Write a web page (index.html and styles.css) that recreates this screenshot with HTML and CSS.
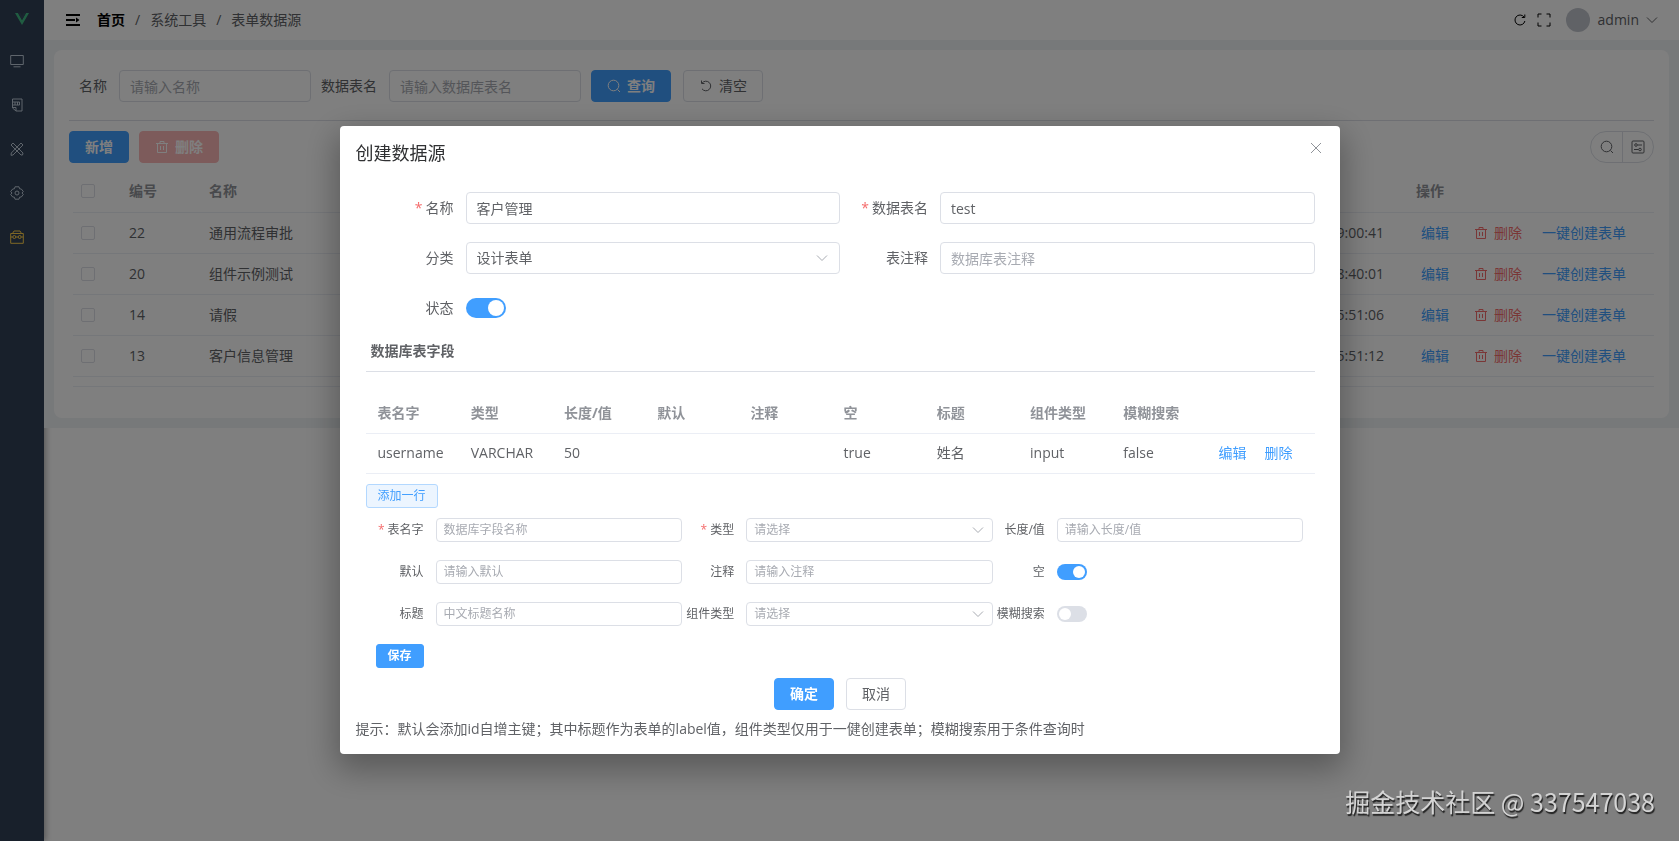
FILE: index.html
```html
<!DOCTYPE html>
<html lang="zh-CN">
<head>
    <meta charset="UTF-8">
    <meta name="viewport" content="width=device-width, initial-scale=1.0">
    <link rel="stylesheet" href="styles.css">
    <title>表单数据源</title>
</head>
<body>
    <svg class="sprite" aria-hidden="true">
        <symbol id="i-delete" viewBox="0 0 14 14"><path d="M1 3.500h12M2.500 3.500v9h9v-9M5 3.500V1.500h4v2M5.500 6v4M8.500 6v4"/></symbol>
        <symbol id="i-search" viewBox="0 0 14 14"><circle cx="6.500" cy="6.500" r="5.300"/><path d="M10.500 10.500l2.500 2.500"/></symbol>
        <symbol id="i-down" viewBox="0 0 14 14"><path d="M2 4.500l5 5 5-5"/></symbol>
    </svg>

    <div class="app">
        <aside class="sidebar">
            <svg class="logo" viewBox="0 0 14 14"><path d="M0 1h3l4 7 4-7h3L7 13z" fill="#41b883"/><path d="M3 1h2.500L7 4l1.500-3H11L7 8z" fill="#34495e"/></svg>
            <nav class="menu">
                <a href="#" aria-label="首页"><svg class="icon" viewBox="0 0 14 14"><path d="M.7 1.500h12.600v9H.7zM3.500 12.800h7"/></svg></a>
                <a href="#" aria-label="表单"><svg class="icon" viewBox="0 0 14 14"><path d="M2.500 1H12v12H6L2.500 10zM2.500 9.500H6V13M2.500 4h7v3h-7M5 4v3M7.500 4v3"/></svg></a>
                <a href="#" aria-label="设计"><svg class="icon" viewBox="0 0 14 14"><path d="M1 3l2-2 10 10-.5 2L11 13zM11 1l2 2L3 13l-2 .3L1.300 11z"/></svg></a>
                <a href="#" aria-label="设置"><svg class="icon" viewBox="0 0 14 14"><path d="M5 .8h4l.6 2 1.700.2 2 2.500L12 7l1.300 1.500-2 2.500-1.700.2-.6 2H5l-.6-2-1.700-.2-2-2.500L2 7 .7 5.500l2-2.500 1.700-.2z"/><circle cx="7" cy="7" r="2"/></svg></a>
                <a href="#" class="active" aria-label="系统工具"><svg class="icon" viewBox="0 0 14 14"><path d="M.7 3.500h12.600v9.800H.7zM2.500 3.500L4 1h6l1.500 2.500M.7 7h2M6 7h2M11.300 7h2"/><circle cx="4.300" cy="7" r="1.500"/><circle cx="9.700" cy="7" r="1.500"/></svg></a>
            </nav>
        </aside>

        <div class="page">
            <header class="header">
                <button class="icon-btn" aria-label="菜单"><svg class="icon fold" viewBox="0 0 14 14"><path d="M0 2h14M0 7h9M0 12h14"/><path d="M10 4.500L13.500 7 10 9.500z" fill="currentColor" stroke="none"/></svg></button>
                <nav class="breadcrumb">
                    <a href="#">首页</a><i>/</i><span>系统工具</span><i>/</i><span>表单数据源</span>
                </nav>
                <div class="tools">
                    <button class="icon-btn" aria-label="刷新"><svg class="icon" viewBox="0 0 14 14"><path d="M11 4A5 5 0 1 0 11.900 8M11.800 1.500v3H8.800"/></svg></button>
                    <button class="icon-btn" aria-label="全屏"><svg class="icon" viewBox="0 0 14 14"><path d="M1 4.500V1h3.500M9.500 1H13v3.500M13 9.500V13H9.500M4.500 13H1V9.500"/></svg></button>
                    <button class="user"><span class="avatar"></span>admin<svg class="icon"><use href="#i-down"/></svg></button>
                </div>
            </header>

            <main class="main">
                <section class="card">
                    <form class="search">
                        <label for="q-name">名称</label>
                        <input class="input" id="q-name" type="text" placeholder="请输入名称">
                        <label for="q-table">数据表名</label>
                        <input class="input" id="q-table" type="text" placeholder="请输入数据库表名">
                        <button type="button" class="btn primary"><svg class="icon"><use href="#i-search"/></svg>查询</button>
                        <button type="button" class="btn"><svg class="icon" viewBox="0 0 14 14"><path d="M3 4.200A4.800 4.800 0 1 1 3 9.800M2.500 1.500v3h3"/></svg>清空</button>
                    </form>
                    <div class="toolbar">
                        <button class="btn primary">新增</button>
                        <button class="btn danger" disabled><svg class="icon"><use href="#i-delete"/></svg>删除</button>
                        <div class="round-group">
                            <button aria-label="搜索"><svg class="icon"><use href="#i-search"/></svg></button>
                            <button aria-label="列设置"><svg class="icon" viewBox="0 0 14 14"><rect x="1" y="1" width="12" height="12" rx="1"/><circle cx="5" cy="5" r="1.300"/><circle cx="9" cy="9.500" r="1.300"/><path d="M6.500 5H11M3 9.500h4.500"/></svg></button>
                        </div>
                    </div>
                    <div class="list-wrap">
                        <table class="list">
                            <colgroup><col class="c-check"><col class="c-id"><col><col class="c-time"><col class="c-action"></colgroup>
                            <thead>
                                <tr><th><input type="checkbox" aria-label="全选"></th><th>编号</th><th>名称</th><th></th><th>操作</th></tr>
                            </thead>
                            <tbody>
                                <tr>
                                    <td><input type="checkbox" aria-label="选择 22"></td><td>22</td><td>通用流程审批</td><td class="time">19:00:41</td>
                                    <td><div class="actions"><a href="#">编辑</a><a href="#" class="del"><svg class="icon"><use href="#i-delete"/></svg>删除</a><a href="#">一键创建表单</a></div></td>
                                </tr>
                                <tr>
                                    <td><input type="checkbox" aria-label="选择 20"></td><td>20</td><td>组件示例测试</td><td class="time">18:40:01</td>
                                    <td><div class="actions"><a href="#">编辑</a><a href="#" class="del"><svg class="icon"><use href="#i-delete"/></svg>删除</a><a href="#">一键创建表单</a></div></td>
                                </tr>
                                <tr>
                                    <td><input type="checkbox" aria-label="选择 14"></td><td>14</td><td>请假</td><td class="time">15:51:06</td>
                                    <td><div class="actions"><a href="#">编辑</a><a href="#" class="del"><svg class="icon"><use href="#i-delete"/></svg>删除</a><a href="#">一键创建表单</a></div></td>
                                </tr>
                                <tr>
                                    <td><input type="checkbox" aria-label="选择 13"></td><td>13</td><td>客户信息管理</td><td class="time">15:51:12</td>
                                    <td><div class="actions"><a href="#">编辑</a><a href="#" class="del"><svg class="icon"><use href="#i-delete"/></svg>删除</a><a href="#">一键创建表单</a></div></td>
                                </tr>
                            </tbody>
                        </table>
                        <div class="list-end"></div>
                    </div>
                </section>
            </main>
        </div>
    </div>

    <div class="overlay">
        <div class="dialog" role="dialog" aria-labelledby="dialog-title">
            <div class="dialog-header">
                <h2 id="dialog-title">创建数据源</h2>
                <button class="close" aria-label="关闭"><svg class="icon" viewBox="0 0 14 14"><path d="M2 2l10 10M12 2L2 12"/></svg></button>
            </div>

            <form class="base-form">
                <div class="field">
                    <label class="required" for="f-name">名称</label>
                    <input class="input" id="f-name" type="text" value="客户管理">
                </div>
                <div class="field">
                    <label class="required" for="f-table">数据表名</label>
                    <input class="input" id="f-table" type="text" value="test">
                </div>
                <div class="field">
                    <label for="f-type">分类</label>
                    <div class="select"><select class="input" id="f-type"><option>设计表单</option></select><svg class="icon"><use href="#i-down"/></svg></div>
                </div>
                <div class="field">
                    <label for="f-remark">表注释</label>
                    <input class="input" id="f-remark" type="text" placeholder="数据库表注释">
                </div>
                <div class="field">
                    <label for="f-status">状态</label>
                    <input class="switch" id="f-status" type="checkbox" checked>
                </div>
            </form>

            <div class="fields">
                <h3>数据库表字段</h3>
                <table class="columns">
                    <thead>
                        <tr><th>表名字</th><th>类型</th><th>长度/值</th><th>默认</th><th>注释</th><th>空</th><th>标题</th><th>组件类型</th><th>模糊搜索</th><th class="c-link"></th></tr>
                    </thead>
                    <tbody>
                        <tr><td>username</td><td>VARCHAR</td><td>50</td><td></td><td></td><td>true</td><td>姓名</td><td>input</td><td>false</td><td><div class="links"><a href="#">编辑</a><a href="#">删除</a></div></td></tr>
                    </tbody>
                </table>
                <button class="btn small plain">添加一行</button>

                <form class="row-form">
                    <div class="field">
                        <label class="required" for="r-name">表名字</label>
                        <input class="input" id="r-name" type="text" placeholder="数据库字段名称">
                    </div>
                    <div class="field">
                        <label class="required" for="r-type">类型</label>
                        <div class="select"><select class="input empty" id="r-type"><option>请选择</option></select><svg class="icon"><use href="#i-down"/></svg></div>
                    </div>
                    <div class="field">
                        <label for="r-length">长度/值</label>
                        <input class="input" id="r-length" type="text" placeholder="请输入长度/值">
                    </div>
                    <div class="field">
                        <label for="r-default">默认</label>
                        <input class="input" id="r-default" type="text" placeholder="请输入默认">
                    </div>
                    <div class="field">
                        <label for="r-comment">注释</label>
                        <input class="input" id="r-comment" type="text" placeholder="请输入注释">
                    </div>
                    <div class="field">
                        <label for="r-null">空</label>
                        <input class="switch" id="r-null" type="checkbox" checked>
                    </div>
                    <div class="field">
                        <label for="r-title">标题</label>
                        <input class="input" id="r-title" type="text" placeholder="中文标题名称">
                    </div>
                    <div class="field">
                        <label for="r-comp">组件类型</label>
                        <div class="select"><select class="input empty" id="r-comp"><option>请选择</option></select><svg class="icon"><use href="#i-down"/></svg></div>
                    </div>
                    <div class="field">
                        <label for="r-like">模糊搜索</label>
                        <input class="switch" id="r-like" type="checkbox">
                    </div>
                </form>
                <button class="btn small primary save">保存</button>
            </div>

            <div class="dialog-footer">
                <button class="btn primary">确定</button>
                <button class="btn">取消</button>
            </div>
            <p class="tip">提示：默认会添加id自增主键；其中标题作为表单的label值，组件类型仅用于一健创建表单；模糊搜索用于条件查询时</p>
        </div>
    </div>

    <div class="watermark">掘金技术社区 @ 337547038</div>
</body>
</html>
```
FILE: styles.css
```css
* {
    box-sizing: border-box;
}

body {
    margin: 0;
    font-family: "Open Sans", "Noto Sans CJK SC", sans-serif;
    font-size: 14px;
    line-height: 20px;
    color: #606266;
    background-color: #fff;
}

button, input, select {
    font: inherit;
    color: inherit;
    margin: 0;
}

button {
    padding: 0;
    border: none;
    background: none;
    cursor: pointer;
}

a {
    color: #409eff;
    text-decoration: none;
}

.sprite {
    display: none;
}

.icon {
    width: 14px;
    height: 14px;
    flex: none;
    fill: none;
    stroke: currentColor;
    stroke-width: 1;
}

/* layout */
.app {
    display: flex;
    min-height: 100vh;
}

.sidebar {
    width: 44px;
    flex: none;
    background-color: #304156;
    box-shadow: 2px 0 6px rgba(0, 0, 0, 0.3);
}

.logo {
    display: block;
    width: 14px;
    height: 14px;
    margin: 12px auto 13px;
}

.menu a {
    display: flex;
    align-items: center;
    height: 44px;
    padding-left: 10px;
    color: #bfcbd9;
}

.menu a.active {
    color: #ffd04b;
}

.page {
    flex: 1;
    min-width: 0;
}

.header {
    display: flex;
    align-items: center;
    height: 40px;
    padding: 0 20px 0 22px;
    background-color: #fff;
}

.icon-btn {
    display: flex;
    color: #000;
}

.icon-btn .fold {
    stroke-width: 2;
}

.breadcrumb {
    margin-left: 17px;
}

.breadcrumb a {
    color: #000;
    font-weight: 700;
}

.breadcrumb i {
    margin: 0 10px;
    font-style: normal;
}

.tools {
    display: flex;
    align-items: center;
    gap: 10px;
    margin-left: auto;
}

.user {
    display: flex;
    align-items: center;
    gap: 6px;
    margin-left: 5px;
}

.avatar {
    width: 24px;
    height: 24px;
    margin-right: 2px;
    border-radius: 50%;
    background-color: #c0c4cc;
}

.main {
    padding: 10px;
    background-color: #eff3f5;
}

.card {
    padding: 20px 15px 30px;
    border-radius: 8px;
    background-color: #fff;
}

/* controls */
.input {
    width: 100%;
    height: 32px;
    padding: 0 10px;
    border: 1px solid #dcdfe6;
    border-radius: 4px;
    background-color: #fff;
    outline: none;
}

.input::placeholder, .input.empty {
    color: #a8abb2;
    opacity: 1;
}

.btn {
    display: inline-flex;
    align-items: center;
    justify-content: center;
    gap: 6px;
    height: 32px;
    padding: 0 15px;
    border: 1px solid #dcdfe6;
    border-radius: 4px;
    background-color: #fff;
}

.btn.primary {
    border-color: #409eff;
    background-color: #409eff;
    color: #fff;
    font-weight: 700;
}

.btn.danger {
    border-color: #fab6b6;
    background-color: #fab6b6;
    color: #fff;
    font-weight: 700;
}

.btn.small {
    height: 24px;
    padding: 0 11px;
    border-radius: 3px;
    font-size: 12px;
}

.btn.plain {
    border-color: #b3d8ff;
    background-color: #ecf5ff;
    color: #409eff;
}

.select {
    position: relative;
    width: 100%;
}

.select select {
    appearance: none;
    display: block;
}

.select .icon {
    position: absolute;
    top: 50%;
    right: 11px;
    margin-top: -7px;
    color: #a8abb2;
    pointer-events: none;
}

.switch {
    appearance: none;
    flex: none;
    width: 40px;
    height: 20px;
    padding: 2px;
    border-radius: 10px;
    background-color: #dcdfe6;
}

.switch::before {
    content: "";
    display: block;
    width: 16px;
    height: 16px;
    border-radius: 50%;
    background-color: #fff;
}

.switch:checked {
    background-color: #409eff;
}

.switch:checked::before {
    margin-left: auto;
}

/* search and toolbar */
.search {
    display: flex;
    align-items: center;
    padding: 0 10px 18px;
    border-bottom: 1px solid #dcdfe6;
}

.search .input {
    width: 192px;
    margin: 0 10px 0 12px;
}

.search .btn {
    margin-right: 12px;
}

.toolbar {
    display: flex;
    gap: 10px;
    margin: 10px 0 8px;
}

.round-group {
    display: flex;
    height: 32px;
    margin-left: auto;
    border: 1px solid #dcdfe6;
    border-radius: 16px;
}

.round-group button {
    display: flex;
    align-items: center;
    justify-content: center;
    width: 31px;
}

.round-group button + button {
    border-left: 1px solid #dcdfe6;
}

/* list */
.list-wrap {
    padding: 0 0 1px 4px;
}

.list {
    width: 100%;
    border-collapse: collapse;
    table-layout: fixed;
}

.list th, .list td {
    height: 41px;
    padding: 0 12px;
    border-bottom: 1px solid #ebeef5;
    text-align: left;
}

.list th {
    color: #909399;
}

.list th:first-child, .list td:first-child {
    padding: 0 8px;
}

.c-check {
    width: 44px;
}

.c-id {
    width: 80px;
}

.c-time {
    width: 200px;
}

.c-action {
    width: 250px;
}

.list .time {
    padding-right: 20px;
    text-align: right;
}

.list input {
    appearance: none;
    display: block;
    width: 14px;
    height: 14px;
    border: 1px solid #dcdfe6;
    border-radius: 2px;
}

.actions {
    display: flex;
    padding-left: 5px;
    gap: 20px;
}

.actions a {
    display: flex;
    align-items: center;
    gap: 6px;
}

.actions .del {
    margin-left: 5px;
    color: #f56c6c;
}

.list-end {
    height: 10px;
    border-bottom: 1px solid #ebeef5;
}

/* dialog */
.overlay {
    position: fixed;
    inset: 0;
    overflow: auto;
    background-color: rgba(0, 0, 0, 0.5);
}

.dialog {
    max-width: 1000px;
    margin: 15vh auto 50px;
    padding: 15px 15px 15px 16px;
    border-radius: 4px;
    background-color: #fff;
    box-shadow: 0 12px 32px 4px rgba(0, 0, 0, 0.3);
}

.dialog-header {
    display: flex;
    justify-content: space-between;
    align-items: flex-start;
    height: 51px;
}

.dialog-header h2 {
    margin: 0;
    font-size: 18px;
    font-weight: 400;
    line-height: 24px;
    color: #303133;
}

.close {
    display: flex;
    padding: 0 1px;
    color: #909399;
}

.close .icon {
    width: 16px;
    height: 14px;
}

.field {
    display: flex;
    align-items: center;
}

.field label {
    flex: none;
    padding-right: 12px;
    text-align: right;
    white-space: nowrap;
}

.required::before {
    content: "*";
    margin-right: 3px;
    color: #f56c6c;
}

.base-form {
    display: grid;
    grid-template-columns: 1fr 1fr;
    gap: 18px 0;
    padding: 0 10px;
}

.base-form .field {
    height: 32px;
}

.base-form label {
    width: 100px;
}

.fields {
    padding: 0 10px;
}

.fields h3 {
    margin: 16px 0 21px;
    padding: 0 5px 10px;
    border-bottom: 1px solid #dcdfe6;
    font-size: 14px;
    line-height: 21px;
}

.columns {
    width: 100%;
    margin-bottom: 10px;
    border-collapse: collapse;
    table-layout: fixed;
}

.columns th, .columns td {
    height: 40px;
    padding: 0 0 0 12px;
    border-bottom: 1px solid #ebeef5;
    text-align: left;
}

.columns th {
    color: #909399;
}

.columns .c-link {
    width: 110px;
}

.links {
    display: flex;
    gap: 18px;
    padding-left: 2px;
}

.row-form {
    display: grid;
    grid-template-columns: repeat(3, 1fr);
    gap: 18px 0;
    margin: 10px 11px 18px 6px;
    font-size: 12px;
}

.row-form .field {
    height: 24px;
}

.row-form label {
    width: 64px;
    display: flex;
    justify-content: flex-end;
}

.row-form .input {
    height: 24px;
    padding: 0 7px;
}

.row-form .select .icon {
    right: 8px;
}

.row-form .switch {
    width: 30px;
    height: 16px;
}

.row-form .switch::before {
    width: 12px;
    height: 12px;
}

.save {
    margin-left: 10px;
}

.dialog-footer {
    display: flex;
    justify-content: center;
    gap: 12px;
    margin: 10px 0 9px;
}

.tip {
    margin: 0;
}

.watermark {
    position: fixed;
    right: 24px;
    bottom: 22px;
    font-family: "Noto Sans CJK SC", sans-serif;
    font-size: 25px;
    line-height: 36px;
    color: #d4d4d4;
    text-shadow: 1px 2px 1px #222;
}
```
